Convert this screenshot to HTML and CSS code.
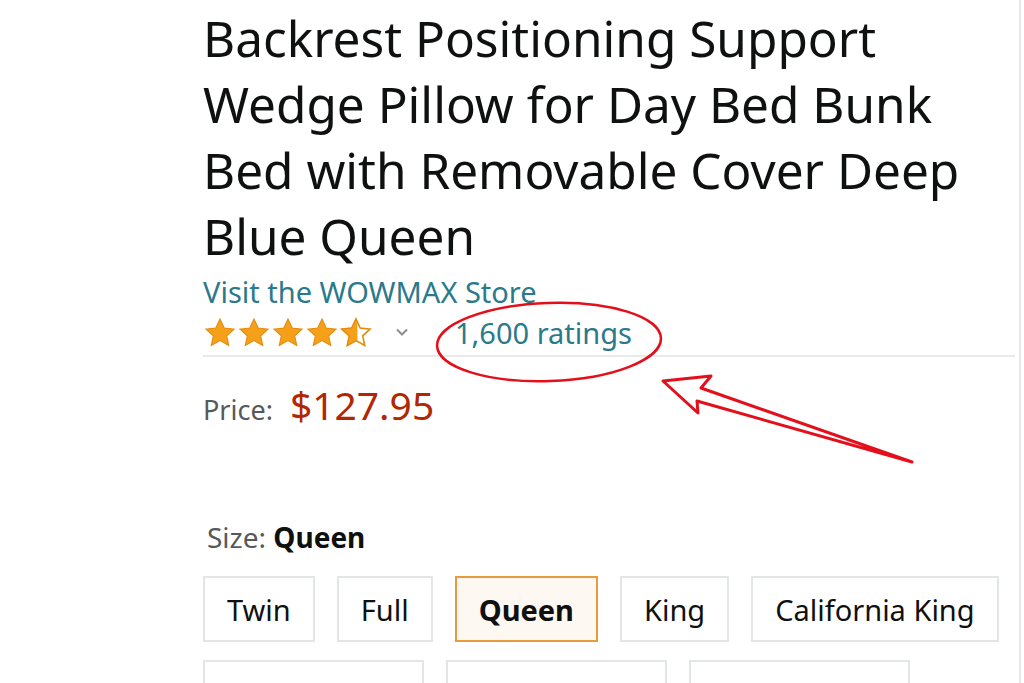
FILE: index.html
```html
<!DOCTYPE html>
<html lang="en">
<head>
    <meta charset="UTF-8">
    <meta name="viewport" content="width=device-width, initial-scale=1.0">
    <title>Wedge Pillow</title>
    <link rel="stylesheet" href="styles.css">
</head>
<body>
    <div class="page">
        <h1 class="title">Backrest Positioning Support Wedge Pillow for Day Bed Bunk Bed with Removable Cover Deep Blue Queen</h1>
        <a class="store" href="#">Visit the WOWMAX Store</a>

        <div class="rating-row">
            <span class="stars">
                <svg width="34" height="30" viewBox="0 0 24 22"><path class="star" d="M12 1.5l3.1 6.6 7.2.8-5.4 4.9 1.5 7.1L12 17.3l-6.4 3.6 1.5-7.1-5.4-4.9 7.2-.8z"/></svg>
                <svg width="34" height="30" viewBox="0 0 24 22"><path class="star" d="M12 1.5l3.1 6.6 7.2.8-5.4 4.9 1.5 7.1L12 17.3l-6.4 3.6 1.5-7.1-5.4-4.9 7.2-.8z"/></svg>
                <svg width="34" height="30" viewBox="0 0 24 22"><path class="star" d="M12 1.5l3.1 6.6 7.2.8-5.4 4.9 1.5 7.1L12 17.3l-6.4 3.6 1.5-7.1-5.4-4.9 7.2-.8z"/></svg>
                <svg width="34" height="30" viewBox="0 0 24 22"><path class="star" d="M12 1.5l3.1 6.6 7.2.8-5.4 4.9 1.5 7.1L12 17.3l-6.4 3.6 1.5-7.1-5.4-4.9 7.2-.8z"/></svg>
                <svg width="34" height="30" viewBox="0 0 24 22">
                    <defs>
                        <clipPath id="half"><rect x="0" y="0" width="13" height="22"/></clipPath>
                    </defs>
                    <path class="star-empty" d="M12 1.5l3.1 6.6 7.2.8-5.4 4.9 1.5 7.1L12 17.3l-6.4 3.6 1.5-7.1-5.4-4.9 7.2-.8z"/>
                    <path class="star" clip-path="url(#half)" d="M12 1.5l3.1 6.6 7.2.8-5.4 4.9 1.5 7.1L12 17.3l-6.4 3.6 1.5-7.1-5.4-4.9 7.2-.8z"/>
                </svg>
            </span>
            <svg class="chevron" width="14" height="10" viewBox="0 0 14 10"><path d="M2 2.5l5 5 5-5" fill="none" stroke="#8a8f8f" stroke-width="2"/></svg>
            <a class="ratings" href="#">1,600 ratings</a>
        </div>

        <div class="price-row">
            <span class="price-label">Price:</span>
            <span class="price">$127.95</span>
        </div>

        <div class="size-label">Size: <b>Queen</b></div>
        <div class="sizes">
            <button class="size">Twin</button>
            <button class="size">Full</button>
            <button class="size selected">Queen</button>
            <button class="size">King</button>
            <button class="size">California King</button>
            <button class="size wide">70x80 Inch</button>
            <button class="size wide">76x80 Inch</button>
            <button class="size wide">78x80 Inch</button>
        </div>
    </div>

    <!-- red annotation drawn over the screenshot -->
    <svg class="markup" width="1024" height="683" viewBox="0 0 1024 683">
        <ellipse cx="549" cy="342" rx="112" ry="39" fill="none" stroke="#e3101c" stroke-width="2.5" transform="rotate(-2 549 342)"/>
        <path d="M663 381 L711 376 L701 388 L912 462 L697 401 L698 413 Z" fill="none" stroke="#e3101c" stroke-width="3" stroke-linejoin="round"/>
    </svg>
</body>
</html>
```

FILE: styles.css
```css
body {
    margin: 0;
    font-family: "Noto Sans", "Open Sans", Arial, sans-serif;
    color: #0f1111;
    background: #fff;
    overflow: hidden;
}
.page {
    position: relative;
    height: 683px;
    padding: 5px 0 0 203px;
    margin-right: 3px;
    border-right: 2px solid #e7e7e7;
    box-sizing: border-box;
    overflow: hidden;
}
.title {
    margin: 0;
    width: 775px;
    font-size: 49.5px;
    font-weight: 400;
    line-height: 66px;
}
.store {
    display: block;
    margin-top: 6px;
    color: #2a7a8c;
    font-size: 29px;
    line-height: 34px;
    text-decoration: none;
}
.rating-row {
    display: flex;
    align-items: center;
    height: 46px;
    margin-right: 4px;
    border-bottom: 2px solid #e9eaea;
}
.stars {
    display: flex;
}
.star {
    fill: #f6a01a;
    stroke: #e38c0c;
    stroke-width: 0.8;
}
.star-empty {
    fill: #fff;
    stroke: #e38c0c;
    stroke-width: 1.2;
}
.chevron {
    margin-left: 22px;
}
.ratings {
    margin-left: 46px;
    color: #2a7a8c;
    font-size: 29px;
    text-decoration: none;
}
.price-row {
    display: flex;
    align-items: baseline;
    gap: 17px;
    margin-top: 25px;
    line-height: 46px;
}
.price-label {
    color: #565959;
    font-size: 27px;
}
.price {
    color: #b12704;
    font-size: 39px;
}
.size-label {
    margin-top: 87px;
    padding-left: 4px;
    color: #565959;
    font-size: 28px;
    line-height: 34px;
}
.size-label b {
    color: #0f1111;
}
.sizes {
    display: flex;
    flex-wrap: wrap;
    gap: 18px 22px;
    margin-top: 22px;
    width: 812px;
}
.size {
    height: 66px;
    padding: 0 22px;
    background: #fff;
    border: 2px solid #e3e6e6;
    font-family: inherit;
    font-size: 29px;
    color: #0f1111;
}
.size.selected {
    background: #fef8f2;
    border-color: #e99a3c;
    font-weight: 700;
}
.size.wide {
    width: 221px;
}
.markup {
    position: absolute;
    left: 0;
    top: 0;
    pointer-events: none;
}
```
